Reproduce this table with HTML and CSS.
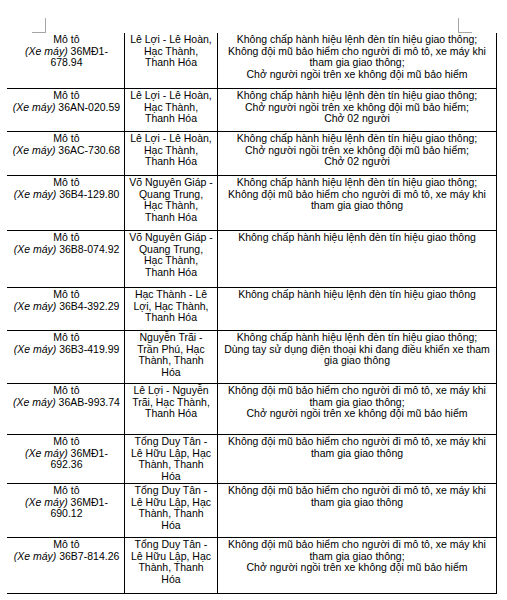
FILE: index.html
```html
<!DOCTYPE html>
<html lang="vi">
<head>
<meta charset="utf-8">
<title>Danh sách vi phạm</title>
<link rel="stylesheet" href="styles.css">
</head>
<body>
<div class="page">
  <span class="mark mark-left"></span>
  <span class="mark mark-right"></span>
  <div class="table">
    <div class="row h56">
      <div class="cell c1">Mô tô<br><i>(Xe máy)</i> 36MĐ1-<br>678.94</div>
      <div class="cell c2">Lê Lợi - Lê Hoàn,<br>Hạc Thành,<br>Thanh Hóa</div>
      <div class="cell c3">Không chấp hành hiệu lệnh đèn tín hiệu giao thông;<br>Không đội mũ bảo hiểm cho người đi mô tô, xe máy khi<br>tham gia giao thông;<br>Chở người ngồi trên xe không đội mũ bảo hiểm</div>
    </div>
    <div class="row h43">
      <div class="cell c1">Mô tô<br><i>(Xe máy)</i> 36AN-020.59</div>
      <div class="cell c2">Lê Lợi - Lê Hoàn,<br>Hạc Thành,<br>Thanh Hóa</div>
      <div class="cell c3">Không chấp hành hiệu lệnh đèn tín hiệu giao thông;<br>Chở người ngồi trên xe không đội mũ bảo hiểm;<br>Chở 02 người</div>
    </div>
    <div class="row h44">
      <div class="cell c1">Mô tô<br><i>(Xe máy)</i> 36AC-730.68</div>
      <div class="cell c2">Lê Lợi - Lê Hoàn,<br>Hạc Thành,<br>Thanh Hóa</div>
      <div class="cell c3">Không chấp hành hiệu lệnh đèn tín hiệu giao thông;<br>Chở người ngồi trên xe không đội mũ bảo hiểm;<br>Chở 02 người</div>
    </div>
    <div class="row h55">
      <div class="cell c1">Mô tô<br><i>(Xe máy)</i> 36B4-129.80</div>
      <div class="cell c2">Võ Nguyên Giáp -<br>Quang Trung,<br>Hạc Thành,<br>Thanh Hóa</div>
      <div class="cell c3">Không chấp hành hiệu lệnh đèn tín hiệu giao thông;<br>Không đội mũ bảo hiểm cho người đi mô tô, xe máy khi<br>tham gia giao thông</div>
    </div>
    <div class="row h57">
      <div class="cell c1">Mô tô<br><i>(Xe máy)</i> 36B8-074.92</div>
      <div class="cell c2">Võ Nguyên Giáp -<br>Quang Trung,<br>Hạc Thành,<br>Thanh Hóa</div>
      <div class="cell c3">Không chấp hành hiệu lệnh đèn tín hiệu giao thông</div>
    </div>
    <div class="row h43">
      <div class="cell c1">Mô tô<br><i>(Xe máy)</i> 36B4-392.29</div>
      <div class="cell c2">Hạc Thành - Lê<br>Lợi, Hạc Thành,<br>Thanh Hóa</div>
      <div class="cell c3">Không chấp hành hiệu lệnh đèn tín hiệu giao thông</div>
    </div>
    <div class="row h53">
      <div class="cell c1">Mô tô<br><i>(Xe máy)</i> 36B3-419.99</div>
      <div class="cell c2">Nguyễn Trãi -<br>Trần Phú, Hạc<br>Thành, Thanh<br>Hóa</div>
      <div class="cell c3">Không chấp hành hiệu lệnh đèn tín hiệu giao thông;<br>Dùng tay sử dụng điện thoại khi đang điều khiển xe tham<br>gia giao thông</div>
    </div>
    <div class="row h51">
      <div class="cell c1">Mô tô<br><i>(Xe máy)</i> 36AB-993.74</div>
      <div class="cell c2">Lê Lợi - Nguyễn<br>Trãi, Hạc Thành,<br>Thanh Hóa</div>
      <div class="cell c3">Không đội mũ bảo hiểm cho người đi mô tô, xe máy khi<br>tham gia giao thông;<br>Chở người ngồi trên xe không đội mũ bảo hiểm</div>
    </div>
    <div class="row h49">
      <div class="cell c1">Mô tô<br><i>(Xe máy)</i> 36MĐ1-<br>692.36</div>
      <div class="cell c2">Tổng Duy Tân -<br>Lê Hữu Lập, Hạc<br>Thành, Thanh<br>Hóa</div>
      <div class="cell c3">Không đội mũ bảo hiểm cho người đi mô tô, xe máy khi<br>tham gia giao thông</div>
    </div>
    <div class="row h54">
      <div class="cell c1">Mô tô<br><i>(Xe máy)</i> 36MĐ1-<br>690.12</div>
      <div class="cell c2">Tổng Duy Tân -<br>Lê Hữu Lập, Hạc<br>Thành, Thanh<br>Hóa</div>
      <div class="cell c3">Không đội mũ bảo hiểm cho người đi mô tô, xe máy khi<br>tham gia giao thông</div>
    </div>
    <div class="row h56">
      <div class="cell c1">Mô tô<br><i>(Xe máy)</i> 36B7-814.26</div>
      <div class="cell c2">Tổng Duy Tân -<br>Lê Hữu Lập, Hạc<br>Thành, Thanh<br>Hóa</div>
      <div class="cell c3">Không đội mũ bảo hiểm cho người đi mô tô, xe máy khi<br>tham gia giao thông;<br>Chở người ngồi trên xe không đội mũ bảo hiểm</div>
    </div>
  </div>
</div>
</body>
</html>
```
FILE: styles.css
```css
html, body {
  margin: 0;
  padding: 0;
  background: #ffffff;
}

.page {
  position: relative;
  width: 507px;
  height: 600px;
  padding-top: 33px;
  box-sizing: border-box;
  font-family: "Liberation Sans", Arial, sans-serif;
  font-size: 10.5px;
  line-height: 11.7px;
  color: #000000;
}

.mark {
  position: absolute;
  top: 18px;
  width: 14px;
  height: 15px;
  box-sizing: border-box;
  border-bottom: 1px solid #a6a6a6;
}

.mark-left {
  left: 32px;
  border-right: 1px solid #a6a6a6;
}

.mark-right {
  left: 458px;
  border-left: 1px solid #a6a6a6;
}

.table {
  margin-left: 7px;
  width: 490px;
}

.row {
  display: grid;
  grid-template-columns: 118px 93px 279px;
  box-sizing: border-box;
}

.cell {
  box-sizing: border-box;
  border-bottom: 1px solid #000000;
  padding-top: 1px;
  text-align: center;
  white-space: nowrap;
  overflow: hidden;
}

.c1, .c2, .c3 {
  border-right: 1px solid #000000;
}

.c1 {
  padding-left: 2px;
}

.h43 { height: 43px; }
.h44 { height: 44px; }
.h49 { height: 49px; }
.h51 { height: 51px; }
.h53 { height: 53px; }
.h54 { height: 54px; }
.h55 { height: 55px; }
.h56 { height: 56px; }
.h57 { height: 57px; }
```
